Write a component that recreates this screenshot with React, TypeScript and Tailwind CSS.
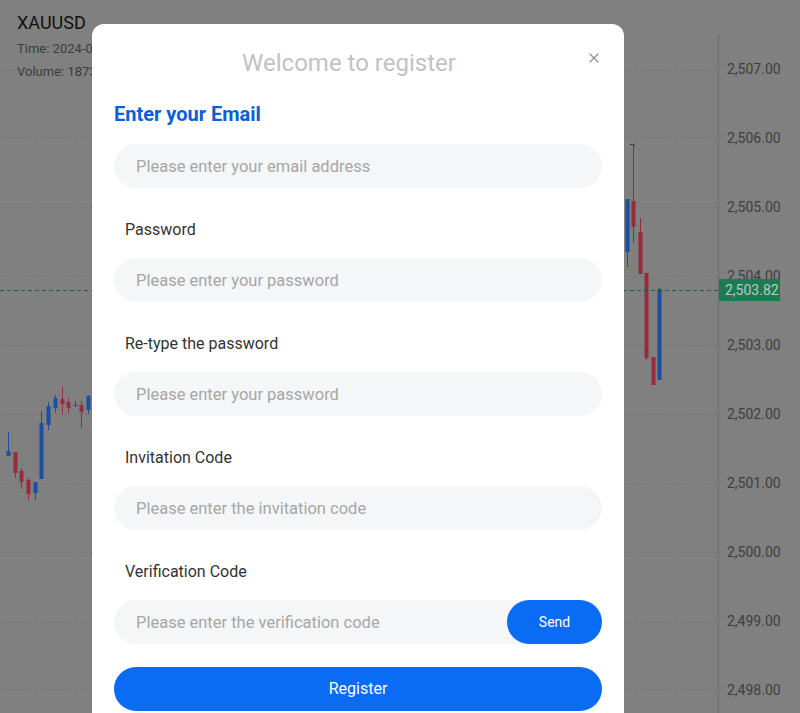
import { X } from "lucide-react";

type Candle = { x: number; top: number; bottom: number; hi: number; lo: number; up: boolean };

// dimmed chart colours (page sits under the modal backdrop)
const RED = "#962c3a";
const BLUE = "#1b4fa3";

const candles: Candle[] = [
  { x: 8, top: 451, bottom: 456, hi: 432, lo: 456, up: true },
  { x: 15, top: 452, bottom: 473, hi: 452, lo: 478, up: false },
  { x: 21, top: 471, bottom: 482, hi: 468, lo: 489, up: false },
  { x: 28, top: 480, bottom: 494, hi: 478, lo: 500, up: false },
  { x: 35, top: 482, bottom: 493, hi: 482, lo: 500, up: true },
  { x: 41, top: 423, bottom: 479, hi: 411, lo: 479, up: true },
  { x: 48, top: 406, bottom: 425, hi: 402, lo: 430, up: true },
  { x: 55, top: 398, bottom: 408, hi: 395, lo: 413, up: true },
  { x: 62, top: 399, bottom: 404, hi: 387, lo: 414, up: false },
  { x: 68, top: 402, bottom: 408, hi: 398, lo: 413, up: false },
  { x: 75, top: 405, bottom: 406, hi: 401, lo: 407, up: true },
  { x: 81, top: 405, bottom: 412, hi: 401, lo: 428, up: false },
  { x: 88, top: 396, bottom: 410, hi: 395, lo: 414, up: true },
  { x: 627, top: 199, bottom: 252, hi: 199, lo: 267, up: true },
  { x: 633, top: 201, bottom: 227, hi: 146, lo: 243, up: false },
  { x: 640, top: 232, bottom: 274, hi: 218, lo: 274, up: false },
  { x: 646, top: 273, bottom: 358, hi: 273, lo: 360, up: false },
  { x: 653, top: 357, bottom: 385, hi: 357, lo: 385, up: false },
  { x: 659, top: 289, bottom: 380, hi: 288, lo: 380, up: true },
];

const prices = ["2,507.00", "2,506.00", "2,505.00", "2,504.00", "2,503.00", "2,502.00", "2,501.00", "2,500.00", "2,499.00", "2,498.00"];

function Chart() {
  return (
    <svg className="absolute inset-0" width={800} height={713} viewBox="0 0 800 713">
      {prices.map((p, i) => {
        const y = 69 + i * 69;
        return (
          <g key={p}>
            <line x1={0} x2={718} y1={y + 0.5} y2={y + 0.5} stroke="#747474" strokeDasharray="2 3" />
            <text x={727} y={y + 5} fontSize={14} fill="#3e3e3e" fontFamily="Roboto, 'Noto Sans', sans-serif">
              {p}
            </text>
          </g>
        );
      })}
      <line x1={718.5} x2={718.5} y1={33} y2={713} stroke="#6c6c6c" />
      {candles.map((c, i) => (
        <g key={i} fill={c.up ? BLUE : RED} stroke={c.up ? BLUE : RED}>
          <line x1={c.x + 0.5} x2={c.x + 0.5} y1={c.hi} y2={c.lo} strokeWidth={1} />
          <rect x={c.x - 1.5} y={c.top} width={4} height={Math.max(1, c.bottom - c.top)} stroke="none" />
        </g>
      ))}
      <path d="M630 144.5h4v3" fill="none" stroke="#3a3a3a" />
      <line x1={0} x2={718} y1={290.5} y2={290.5} stroke="#1f5e45" strokeDasharray="4 3" />
      <rect x={719} y={279} width={61} height={22} fill="#1e7a53" />
      <text x={725} y={295} fontSize={14} fill="#b9cdc3" fontFamily="Roboto, 'Noto Sans', sans-serif">
        2,503.82
      </text>
    </svg>
  );
}

const inputCls =
  "mt-4 block h-[44px] w-full rounded-full bg-[#f5f6f7] px-[22px] text-[16.5px] text-[#333] outline-none placeholder:text-[#a6a6a6]";

function Field({ label, placeholder }: { label: string; placeholder: string }) {
  return (
    <div className="mt-[30px]">
      <label className="block pl-[11px] text-[16px] leading-6 text-[#333]">{label}</label>
      <input type="password" placeholder={placeholder} className={inputCls} />
    </div>
  );
}

export default function App() {
  return (
    <div
      className="relative h-[713px] w-full overflow-hidden bg-[#808080]"
      style={{ fontFamily: "Roboto, 'Noto Sans', Arial, sans-serif" }}
    >
      <Chart />

      {/* chart legend */}
      <div className="absolute left-[17px] top-[11px]">
        <div className="text-[18px] leading-6 text-[#101010]">XAUUSD</div>
        <div className="mt-[2px] text-[13px] leading-[23px] text-[#3c3c3c]">Time: 2024-08-20 14:35</div>
        <div className="text-[13px] leading-[23px] text-[#3c3c3c]">Volume: 1873</div>
      </div>

      {/* register modal */}
      <div className="absolute left-[92px] top-[24px] w-[532px] rounded-xl bg-white px-[22px] pb-8">
        <h2 className="pr-[18px] pt-[23px] text-center text-[24px] leading-8 text-[#c2c2c2]">Welcome to register</h2>
        <button className="absolute right-[22px] top-[26px] text-[#8a8a8a]">
          <X className="h-[16px] w-[16px]" strokeWidth={1.6} />
        </button>

        <div className="mt-[21px] text-[20px] font-bold leading-7 text-[#0a5fd6]">Enter your Email</div>
        <input type="email" placeholder="Please enter your email address" className={inputCls} />

        <Field label="Password" placeholder="Please enter your password" />
        <Field label="Re-type the password" placeholder="Please enter your password" />
        <Field label="Invitation Code" placeholder="Please enter the invitation code" />

        <div className="mt-[30px]">
          <label className="block pl-[11px] text-[16px] leading-6 text-[#333]">Verification Code</label>
          <div className="mt-4 flex h-[44px] items-center rounded-full bg-[#f5f6f7]">
            <input
              placeholder="Please enter the verification code"
              className="h-full min-w-0 flex-1 bg-transparent px-[22px] text-[16.5px] text-[#333] outline-none placeholder:text-[#a6a6a6]"
            />
            <button className="h-full w-[95px] rounded-full bg-[#0a6cf5] text-[14px] text-white">Send</button>
          </div>
        </div>

        <button className="mt-[23px] block h-[44px] w-full rounded-full bg-[#0a6cf5] text-[16px] text-white">
          Register
        </button>
      </div>
    </div>
  );
}
